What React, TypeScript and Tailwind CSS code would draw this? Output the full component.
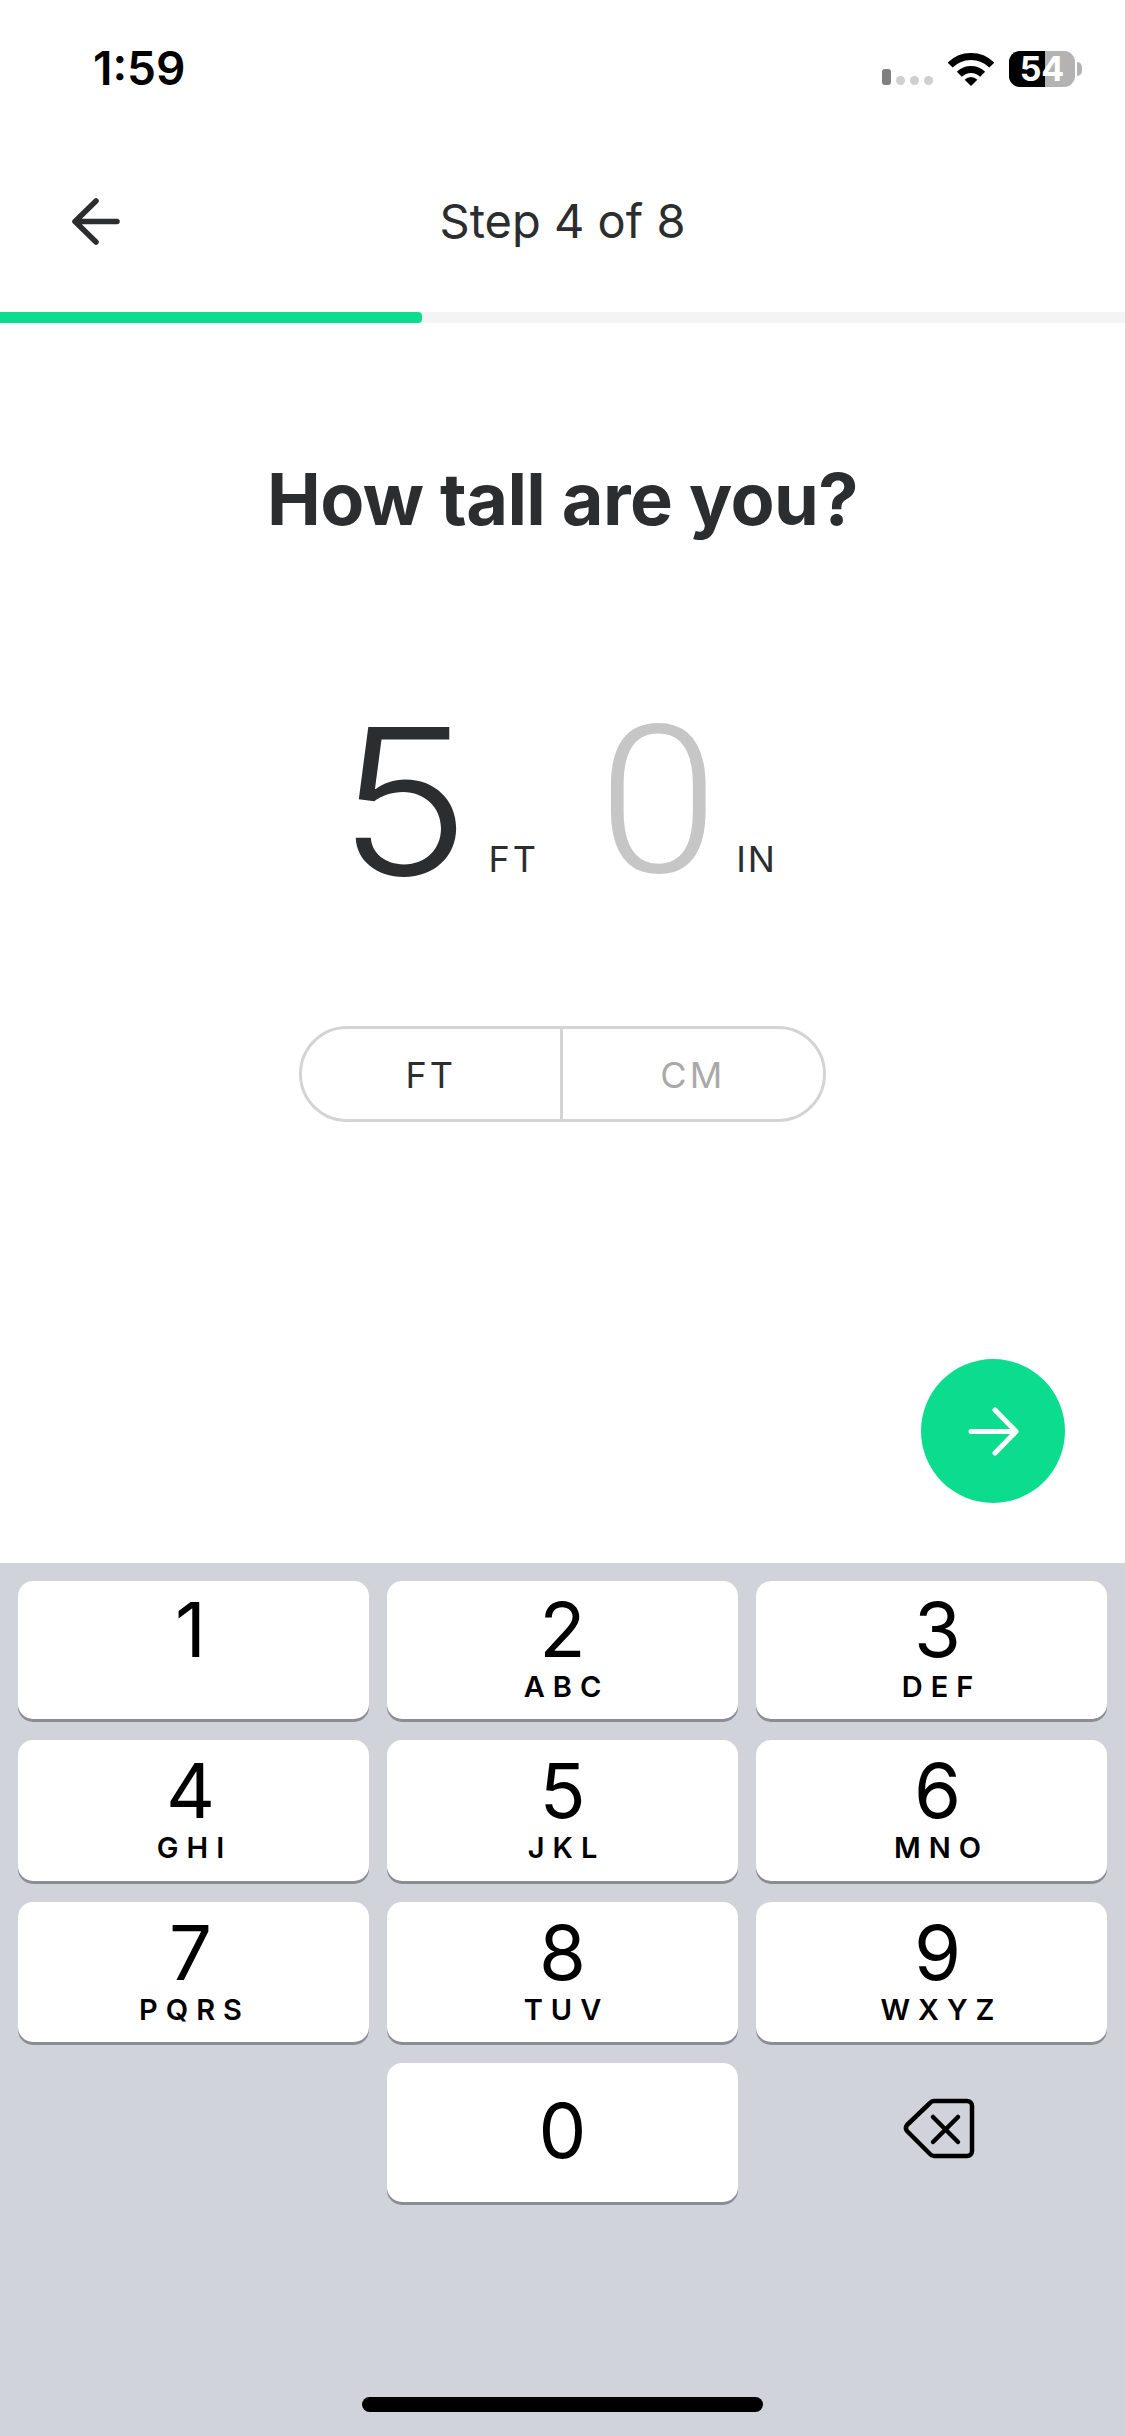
import React from "react";

const keys = [
  { digit: "1", letters: "", pad: "pt-[10px] pr-[6px]" },
  { digit: "2", letters: "ABC", pad: "pt-[10px]" },
  { digit: "3", letters: "DEF", pad: "pt-[10px] pl-[12px]" },
  { digit: "4", letters: "GHI", pad: "pt-[12px] pr-[6px]" },
  { digit: "5", letters: "JKL", pad: "pt-[12px]" },
  { digit: "6", letters: "MNO", pad: "pt-[12px] pl-[12px]" },
  { digit: "7", letters: "PQRS", pad: "pt-[12px] pr-[6px]" },
  { digit: "8", letters: "TUV", pad: "pt-[12px]" },
  { digit: "9", letters: "WXYZ", pad: "pt-[12px] pl-[12px]" },
];

const Key: React.FC<{ digit: string; letters?: string; className?: string }> = ({
  digit,
  letters,
  className = "",
}) => (
  <div className={`h-full rounded-[15px] bg-white shadow-[0_3px_0_#8b8d92] flex flex-col items-center text-black ${className}`}>
    <span className="text-[76px] leading-[76px] font-normal">{digit}</span>
    {letters && (
      <span className="text-[29px] leading-[30px] font-semibold tracking-[8px] mt-[5px] pl-[8px]">
        {letters}
      </span>
    )}
  </div>
);

const StatusBar = () => (
  <div className="h-[130px] flex items-start justify-between pl-[93px] pr-[43px] pt-[44px] text-black">
    <span className="text-[46px] leading-[48px] font-semibold">1:59</span>
    <div className="flex items-center mt-[7px]">
      <div className="flex items-end gap-[5px] h-[36px] pb-[2px]">
        <div className="w-[9px] h-[16px] rounded-[3px] bg-[#808080]" />
        <div className="w-[9px] h-[9px] rounded-full bg-[#cfcfcf]" />
        <div className="w-[9px] h-[9px] rounded-full bg-[#cfcfcf]" />
        <div className="w-[9px] h-[9px] rounded-full bg-[#cfcfcf]" />
      </div>
      <svg width="46" height="33" viewBox="0 0 46 33" className="ml-[15px]">
        <path d="M2.14 12.14A29.5 29.5 0 0 1 43.86 12.14" fill="none" stroke="#000" strokeWidth="7" />
        <path d="M11.33 21.33A16.5 16.5 0 0 1 34.67 21.33" fill="none" stroke="#000" strokeWidth="7" />
        <path d="M23 33L16.64 26.64A9 9 0 0 1 29.36 26.64Z" fill="#000" />
      </svg>
      <div className="relative ml-[15px] w-[66px] h-[36px] rounded-[11px] bg-[#b3b3b3] overflow-hidden flex items-center justify-center">
        <div className="absolute left-0 top-0 bottom-0 w-[36px] bg-black" />
        <span className="relative text-white text-[34px] leading-none font-bold">54</span>
      </div>
      <div className="ml-[2px] w-[5px] h-[14px] rounded-r-full bg-[#b3b3b3]" />
    </div>
  </div>
);

export default function App() {
  return (
    <div
      className="w-[1125px] h-[2436px] bg-white flex flex-col overflow-hidden"
      style={{ fontFamily: "Inter, 'Noto Sans', sans-serif" }}
    >
      <StatusBar />

      {/* header */}
      <div className="relative h-[182px] flex items-center justify-center">
        <svg width="54" height="55" viewBox="0 0 54 55" className="absolute left-[69px] top-[64px]" fill="none" stroke="#2b2d2f" strokeWidth="5.5" strokeLinecap="round" strokeLinejoin="round">
          <path d="M27 7L6 27.5L27 48M6 27.5H48" />
        </svg>
        <span className="text-[47px] leading-[56px] text-[#2b2d2f]">Step 4 of 8</span>
      </div>

      {/* progress */}
      <div className="h-[11px] bg-[#f4f4f4]">
        <div className="h-full w-[422px] rounded-r-[4px] bg-[#0bdc8e]" />
      </div>

      <h1 className="mt-[132px] text-center text-[72px] leading-[88px] font-bold tracking-[-0.55px] text-[#2b2d2f]">
        How tall are you?
      </h1>

      {/* height value */}
      <div className="mt-[163px] h-[190px] pr-[4px] flex justify-center items-baseline text-[#2b2d2f]">
        <span className="text-[203px] leading-[190px] font-light scale-x-[1.1]">5</span>
        <span className="ml-[24px] text-[36px] leading-none tracking-[3px] -translate-y-[3px]">FT</span>
        <span className="ml-[62px] text-[206px] leading-[190px] font-light text-[#c6c6c6] -translate-y-[3px] scale-x-[1.05]" style={{ fontFamily: "Roboto, sans-serif" }}>0</span>
        <span className="ml-[21px] text-[36px] leading-none tracking-[2px] -translate-y-[3px]">IN</span>
      </div>

      {/* unit toggle */}
      <div className="mt-[130px] mx-auto w-[527px] h-[96px] rounded-full border-[3px] border-[#d4d4d4] grid grid-cols-2">
        <div className="border-r-[3px] border-[#d4d4d4] flex items-center justify-center pt-[2px] text-[36px] font-normal tracking-[3px] text-[#2b2d2f]">FT</div>
        <div className="flex items-center justify-center pt-[2px] text-[36px] font-normal tracking-[3px] text-[#a9a9a9]">CM</div>
      </div>

      {/* next button */}
      <div className="mt-[237px] flex justify-end pr-[60px]">
        <div className="w-[144px] h-[144px] rounded-full bg-[#0bdc8e] flex items-center justify-center">
          <svg width="54" height="53" viewBox="0 0 54 53" fill="none" stroke="#fff" strokeWidth="5" strokeLinecap="round" strokeLinejoin="round">
            <path d="M29 5L50 26.5L29 48M50 26.5H5" />
          </svg>
        </div>
      </div>

      {/* keyboard */}
      <div className="mt-auto h-[873px] bg-[#d0d3da] pt-[18px] px-[18px] flex flex-col">
        <div className="grid grid-cols-3 grid-rows-[138px_141px_140px_139px] gap-x-[18px] gap-y-[21px]">
          {keys.map((k) => (
            <Key key={k.digit} digit={k.digit} letters={k.letters} className={k.pad} />
          ))}
          <div />
          <Key digit="0" className="pt-[29px]" />
          <div className="flex items-center justify-center pl-[13px] pb-[8px]">
            <svg width="75" height="65" viewBox="0 0 75 65" fill="none" stroke="#000" strokeWidth="4.5" strokeLinecap="round" strokeLinejoin="round">
              <path d="M33 5H66a5 5 0 0 1 5 5V55a5 5 0 0 1-5 5H33a5 5 0 0 1-4-2L6 35a5 5 0 0 1 0-6L29 7a5 5 0 0 1 4-2Z" />
              <path d="M32 21L57 46M57 21L32 46" />
            </svg>
          </div>
        </div>
        <div className="mt-auto mb-[24px] mx-auto w-[401px] h-[15px] rounded-full bg-black" />
      </div>
    </div>
  );
}
